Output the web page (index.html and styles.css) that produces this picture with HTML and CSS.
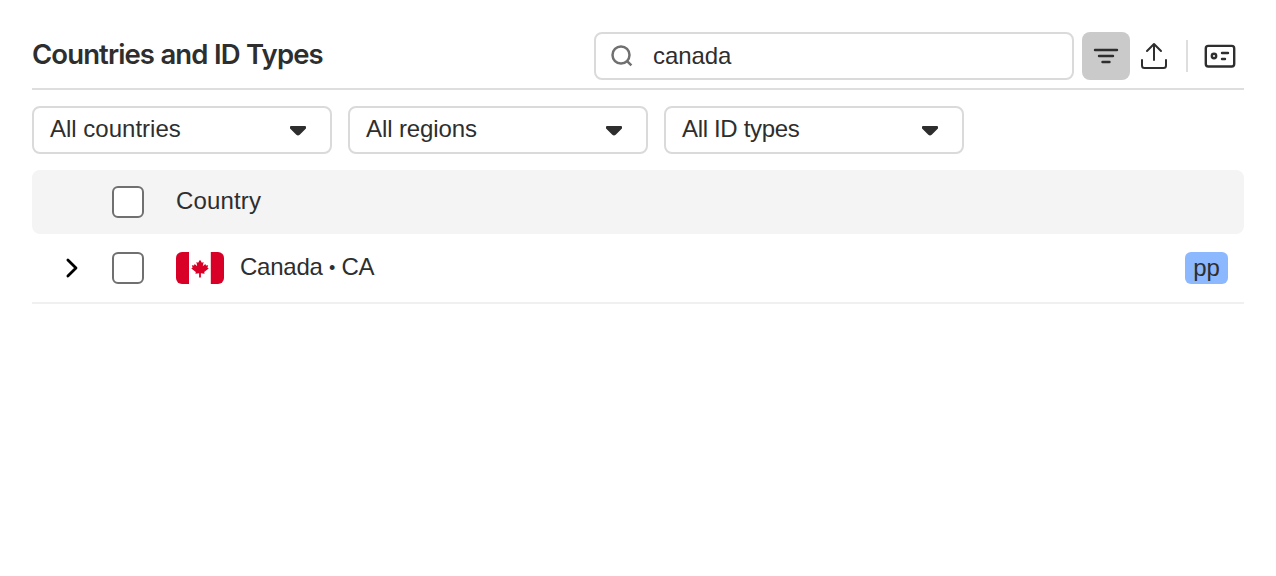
FILE: index.html
```html
<!DOCTYPE html>
<html lang="en">
<head>
<meta charset="utf-8">
<title>Countries and ID Types</title>
<link rel="stylesheet" href="styles.css">
</head>
<body>
<main class="page">
  <header class="header">
    <h1 class="title">Countries and ID Types</h1>
    <div class="tools">
      <div class="search">
        <svg class="search-icon" width="24" height="24" viewBox="0 0 24 24"><circle cx="11" cy="11" r="8.500"/><path d="M16.800 16.800l4.600 4.600"/></svg>
        <span class="search-text">canada</span>
      </div>
      <button class="tool filter" aria-label="Filter"><svg width="48" height="48" viewBox="0 0 48 48"><path d="M13 18h22M17 24h14M20.500 30h7"/></svg></button>
      <button class="tool" aria-label="Export"><svg class="thin" width="48" height="48" viewBox="0 0 48 48"><path d="M24 28V12.500M17 19l7-7 7 7M12 28v5.500a2.500 2.500 0 0 0 2.500 2.500h19a2.500 2.500 0 0 0 2.500-2.500V28"/></svg></button>
      <span class="divider"></span>
      <button class="tool" aria-label="ID card"><svg width="48" height="48" viewBox="0 0 48 48"><rect x="9.800" y="13.900" width="28.400" height="20.600" rx="2.500"/><circle cx="18" cy="24" r="2.200"/><path d="M26 21h6M26 27h3"/></svg></button>
    </div>
  </header>
  <section class="filters">
    <div class="select"><span class="label">All countries</span><svg class="caret" width="18" height="12" viewBox="0 0 18 12"><path d="M2 2h14v1L10 9.100q-1 .9-2 0L2 3z"/></svg></div>
    <div class="select"><span class="label regions">All regions</span><svg class="caret" width="18" height="12" viewBox="0 0 18 12"><path d="M2 2h14v1L10 9.100q-1 .9-2 0L2 3z"/></svg></div>
    <div class="select"><span class="label types">All ID types</span><svg class="caret" width="18" height="12" viewBox="0 0 18 12"><path d="M2 2h14v1L10 9.100q-1 .9-2 0L2 3z"/></svg></div>
  </section>
  <section class="table">
    <div class="row head"><span class="expand"></span><span class="check"></span><span class="cell country">Country</span></div>
    <div class="row item">
      <span class="expand"><svg class="chevron" width="16" height="24" viewBox="0 0 16 24"><path d="M3.900 4l8.100 8-8.100 8"/></svg></span>
      <span class="check"></span>
      <svg class="flag" width="48" height="32" viewBox="0 0 48 32"><path fill="#fff" d="M0 0h48v32H0z"/><path fill="#d80027" d="M0 0h13v32H0zM34.800 0H48v32H34.800zM24 7.800l1.900 3 1.700-.8-.8 4.200 2.500-2.100.7 1.400 2.200-.3-.8 2.400 1.300.8-4.500 3.600.4 1.700-3.700-.5v4.400h-1.800v-4.400l-3.700.5.400-1.700-4.500-3.600 1.300-.8-.8-2.400 2.200.3.700-1.400 2.500 2.100-.8-4.200 1.700.8z"/></svg>
      <span class="cell name">Canada <span class="dot">•</span> CA</span>
      <span class="badge">pp</span>
    </div>
  </section>
</main>
</body>
</html>
```
FILE: styles.css
```css
* { box-sizing: border-box; }
body {
  margin: 0;
  background: #fff;
  color: #2e2e2e;
  font: 24px/32px "Liberation Sans", Arial, sans-serif;
}
.page { padding: 32px 32px 0; }
.header {
  display: flex;
  justify-content: space-between;
  height: 58px;
  border-bottom: 2px solid #dedede;
}
.title {
  margin: 0;
  padding-top: 2px;
  font: 600 27.5px/40px Inter, sans-serif;
  letter-spacing: -0.9px;
  word-spacing: 0.4px;
  white-space: nowrap;
}
.tools { display: flex; height: 48px; }
.search {
  display: flex;
  align-items: center;
  width: 480px;
  height: 48px;
  margin-right: 8px;
  padding-left: 14px;
  border: 2px solid #dadada;
  border-radius: 8px;
}
.search-icon { fill: none; stroke: #707070; stroke-width: 2.5; }
.search-text { margin-left: 19px; letter-spacing: -0.1px; }
.tool {
  width: 48px;
  height: 48px;
  padding: 0;
  border: 0;
  border-radius: 8px;
  background: none;
}
.filter { background: #cacaca; }
.tool svg {
  display: block;
  fill: none;
  stroke: #2e2e2e;
  stroke-width: 2.4;
  stroke-linecap: round;
  stroke-linejoin: round;
}
.tool .thin { stroke-width: 2; }
.divider {
  width: 2px;
  height: 32px;
  margin: 8px 8px 0;
  background: #dedede;
}
.filters { display: flex; gap: 16px; padding-top: 16px; }
.select {
  display: flex;
  justify-content: space-between;
  width: 300px;
  height: 48px;
  padding: 5px 23px 0 16px;
  border: 2px solid #dadada;
  border-radius: 8px;
}
.regions { letter-spacing: -0.1px; }
.types { letter-spacing: -0.33px; }
.caret {
  margin-top: 12px;
  fill: #2e2e2e;
  stroke: #2e2e2e;
  stroke-width: 2;
  stroke-linejoin: round;
}
.table { margin-top: 16px; }
.row { display: flex; align-items: center; }
.head { height: 64px; border-radius: 8px; background: #f4f4f4; }
.item { height: 70px; padding-right: 16px; border-bottom: 2px solid #f0f0f0; }
.expand { width: 80px; height: 24px; padding-left: 32px; }
.chevron { display: block; fill: none; stroke: #000; stroke-width: 2.8; stroke-linecap: round; stroke-linejoin: round; }
.check {
  width: 32px;
  height: 32px;
  margin-right: 32px;
  border: 2px solid #707070;
  border-radius: 6px;
  background: #fff;
}
.cell { padding-bottom: 2px; }
.country { letter-spacing: 0.15px; }
.name { letter-spacing: -0.25px; }
.dot { font-size: 18px; line-height: 24px; vertical-align: 1px; }
.flag { margin-right: 16px; border-radius: 6px; }
.badge {
  width: 43px;
  height: 32px;
  margin-left: auto;
  border-radius: 6px;
  background: #8bb8ff;
  text-align: center;
}
```
